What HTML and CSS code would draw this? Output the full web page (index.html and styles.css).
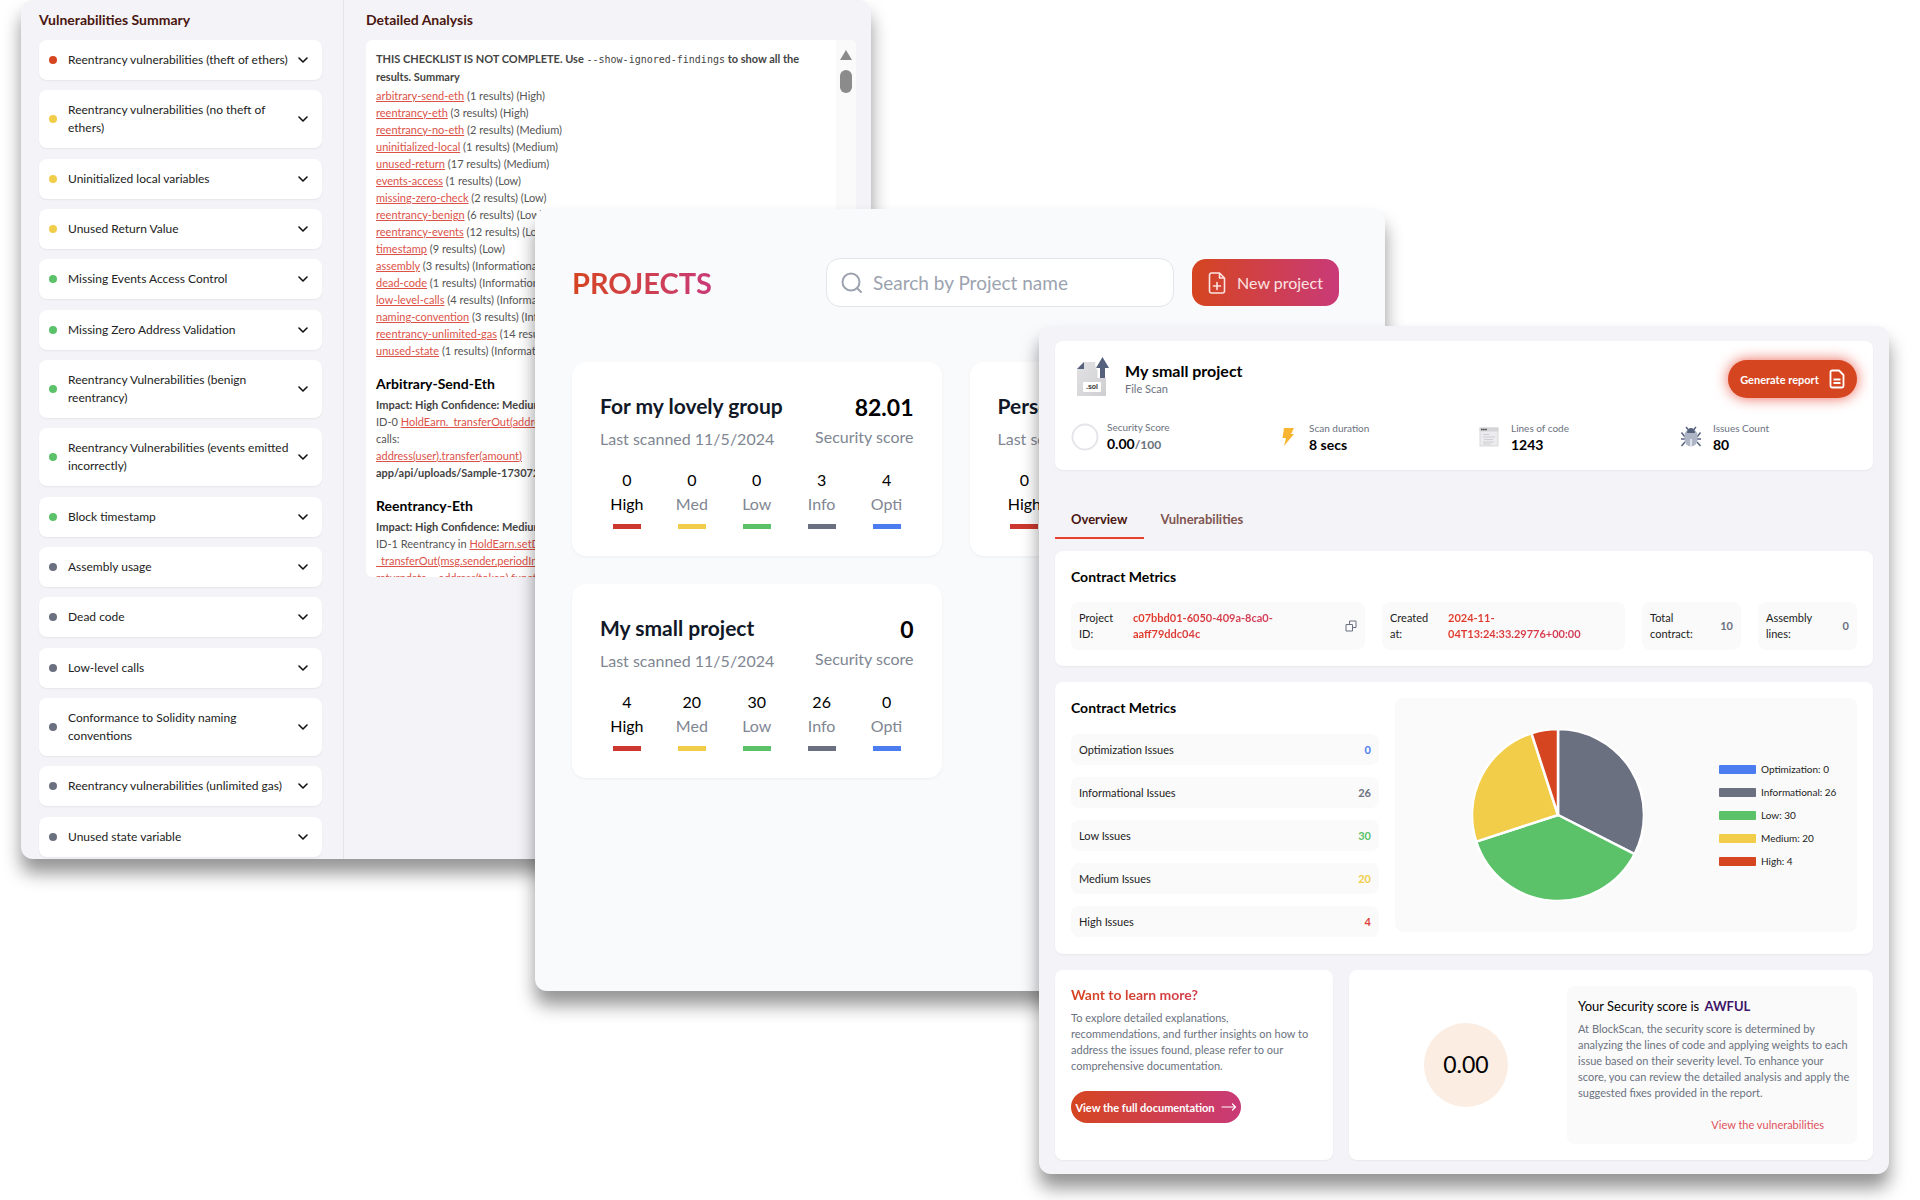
FILE: index.html
```html
<!DOCTYPE html>
<html lang="en">
<head>
<meta charset="utf-8">
<title>BlockScan</title>
<link rel="stylesheet" href="styles.css">
</head>
<body>
<svg class="defs" aria-hidden="true">
  <symbol id="chevron" viewBox="0 0 10 6"><path d="M1 1l4 4 4-4" fill="none" stroke="currentColor" stroke-width="1.6" stroke-linecap="round" stroke-linejoin="round"/></symbol>
</svg>
<main class="desktop">

<section class="window findings">
  <aside class="summary">
    <h2 class="side-title">Vulnerabilities Summary</h2>
    <div class="accordion">
      <button class="acc"><i class="dot high"></i><span>Reentrancy vulnerabilities (theft of ethers)</span><svg class="chev"><use href="#chevron"/></svg></button>
      <button class="acc"><i class="dot medium"></i><span>Reentrancy vulnerabilities (no theft of<br>ethers)</span><svg class="chev"><use href="#chevron"/></svg></button>
      <button class="acc"><i class="dot medium"></i><span>Uninitialized local variables</span><svg class="chev"><use href="#chevron"/></svg></button>
      <button class="acc"><i class="dot medium"></i><span>Unused Return Value</span><svg class="chev"><use href="#chevron"/></svg></button>
      <button class="acc"><i class="dot low"></i><span>Missing Events Access Control</span><svg class="chev"><use href="#chevron"/></svg></button>
      <button class="acc"><i class="dot low"></i><span>Missing Zero Address Validation</span><svg class="chev"><use href="#chevron"/></svg></button>
      <button class="acc"><i class="dot low"></i><span>Reentrancy Vulnerabilities (benign<br>reentrancy)</span><svg class="chev"><use href="#chevron"/></svg></button>
      <button class="acc"><i class="dot low"></i><span>Reentrancy Vulnerabilities (events emitted<br>incorrectly)</span><svg class="chev"><use href="#chevron"/></svg></button>
      <button class="acc"><i class="dot low"></i><span>Block timestamp</span><svg class="chev"><use href="#chevron"/></svg></button>
      <button class="acc"><i class="dot info"></i><span>Assembly usage</span><svg class="chev"><use href="#chevron"/></svg></button>
      <button class="acc"><i class="dot info"></i><span>Dead code</span><svg class="chev"><use href="#chevron"/></svg></button>
      <button class="acc"><i class="dot info"></i><span>Low-level calls</span><svg class="chev"><use href="#chevron"/></svg></button>
      <button class="acc"><i class="dot info"></i><span>Conformance to Solidity naming<br>conventions</span><svg class="chev"><use href="#chevron"/></svg></button>
      <button class="acc"><i class="dot info"></i><span>Reentrancy vulnerabilities (unlimited gas)</span><svg class="chev"><use href="#chevron"/></svg></button>
      <button class="acc"><i class="dot info"></i><span>Unused state variable</span><svg class="chev"><use href="#chevron"/></svg></button>
    </div>
  </aside>
  <div class="analysis">
    <h2 class="side-title">Detailed Analysis</h2>
    <div class="report">
      <div class="report-text">
        <p class="notice">THIS CHECKLIST IS NOT COMPLETE. Use <code>--show-ignored-findings</code> to show all the<br>results. Summary</p>
        <ul class="checks">
          <li><a href="#c1">arbitrary-send-eth</a> (1 results) (High)</li>
          <li><a href="#c2">reentrancy-eth</a> (3 results) (High)</li>
          <li><a href="#c3">reentrancy-no-eth</a> (2 results) (Medium)</li>
          <li><a href="#c4">uninitialized-local</a> (1 results) (Medium)</li>
          <li><a href="#c5">unused-return</a> (17 results) (Medium)</li>
          <li><a href="#c6">events-access</a> (1 results) (Low)</li>
          <li><a href="#c7">missing-zero-check</a> (2 results) (Low)</li>
          <li><a href="#c8">reentrancy-benign</a> (6 results) (Low)</li>
          <li><a href="#c9">reentrancy-events</a> (12 results) (Low)</li>
          <li><a href="#c10">timestamp</a> (9 results) (Low)</li>
          <li><a href="#c11">assembly</a> (3 results) (Informational)</li>
          <li><a href="#c12">dead-code</a> (1 results) (Informational)</li>
          <li><a href="#c13">low-level-calls</a> (4 results) (Informational)</li>
          <li><a href="#c14">naming-convention</a> (3 results) (Informational)</li>
          <li><a href="#c15">reentrancy-unlimited-gas</a> (14 results) (Informational)</li>
          <li><a href="#c16">unused-state</a> (1 results) (Informational)</li>
        </ul>
        <h3>Arbitrary-Send-Eth</h3>
        <p><b>Impact: High Confidence: Medium</b><br>ID-0 <a href="#f0">HoldEarn._transferOut(address,uint256)</a> sends eth<br>calls:<br><a href="#f1">address(user).transfer(amount)</a><br><b>app/api/uploads/Sample-1730726662.sol</b></p>
        <h3>Reentrancy-Eth</h3>
        <p><b>Impact: High Confidence: Medium</b><br>ID-1 Reentrancy in <a href="#f2">HoldEarn.setDeposit(uint256)</a>:<br><a href="#f3">_transferOut(msg.sender,periodInfo)</a><br><a href="#f4">returndata = address(token).functionCall(data)</a></p>
      </div>
      <div class="scroll" aria-hidden="true"><i class="up"></i><i class="thumb"></i></div>
    </div>
  </div>
</section>

<section class="window projects">
  <header class="bar">
    <h1>PROJECTS</h1>
    <label class="search">
      <svg viewBox="0 0 22 22"><circle cx="10" cy="10" r="8.5"/><path d="M16.200 16.200L20 20"/></svg>
      <input type="text" aria-label="Search by Project name" placeholder="Search by Project name">
    </label>
    <button class="new"><svg viewBox="0 0 18 22"><path d="M11.500 1H3.500A2 2 0 0 0 1.500 3v16a2 2 0 0 0 2 2h11a2 2 0 0 0 2-2V6zM11.500 1v5h5M9 10.500v7M5.500 14h7"/></svg>New project</button>
  </header>
  <div class="cards">
    <article class="card">
      <div class="top"><div><h2>For my lovely group</h2><p>Last scanned 11/5/2024</p></div><div class="score"><strong>82.01</strong><p>Security score</p></div></div>
      <ul class="counts"><li><b>0</b><span class="first">High</span><i class="c-high"></i></li><li><b>0</b><span>Med</span><i class="medium"></i></li><li><b>0</b><span>Low</span><i class="low"></i></li><li><b>3</b><span>Info</span><i class="info"></i></li><li><b>4</b><span>Opti</span><i class="opti"></i></li></ul>
    </article>
    <article class="card">
      <div class="top"><div><h2>Personal project</h2><p>Last scanned 11/5/2024</p></div><div class="score"><strong>0</strong><p>Security score</p></div></div>
      <ul class="counts"><li><b>0</b><span class="first">High</span><i class="c-high"></i></li><li><b>0</b><span>Med</span><i class="medium"></i></li><li><b>0</b><span>Low</span><i class="low"></i></li><li><b>0</b><span>Info</span><i class="info"></i></li><li><b>0</b><span>Opti</span><i class="opti"></i></li></ul>
    </article>
    <article class="card">
      <div class="top"><div><h2>My small project</h2><p>Last scanned 11/5/2024</p></div><div class="score"><strong>0</strong><p>Security score</p></div></div>
      <ul class="counts"><li><b>4</b><span class="first">High</span><i class="c-high"></i></li><li><b>20</b><span>Med</span><i class="medium"></i></li><li><b>30</b><span>Low</span><i class="low"></i></li><li><b>26</b><span>Info</span><i class="info"></i></li><li><b>0</b><span>Opti</span><i class="opti"></i></li></ul>
    </article>
  </div>
</section>

<section class="window overview">
  <header class="panel head">
    <div class="head-row">
      <svg class="file" viewBox="0 0 32 40">
        <defs><linearGradient id="fg" x1="0" y1="0" x2="1" y2="1"><stop offset="0" stop-color="#e2e2e4"/><stop offset="1" stop-color="#cfcfd2"/></linearGradient></defs>
        <path d="M7 5h11.500c-1 3 0 6 2 8v8h8.500v18H0V12z" fill="url(#fg)"/>
        <path d="M7 5v7H0z" fill="#56617d"/>
        <path d="M25.500 0l6.500 11h-4v10h-5V11h-4z" fill="#56617d"/>
        <rect x="6" y="25" width="18" height="10" rx="1" fill="#fff"/>
        <text x="15" y="32" text-anchor="middle" class="file-ext">.sol</text>
      </svg>
      <div class="who"><h1>My small project</h1><p>File Scan</p></div>
      <button class="generate">Generate report<svg viewBox="0 0 16 20"><path d="M10 1.500H3A1.500 1.500 0 0 0 1.500 3v14A1.500 1.500 0 0 0 3 18.500h10a1.500 1.500 0 0 0 1.500-1.500V6zM4.500 10.500h7M4.500 14h7"/></svg></button>
    </div>
    <dl class="facts">
      <div><svg viewBox="0 0 28 28"><circle cx="14" cy="14" r="12.500" fill="none" stroke="#e5e5ea" stroke-width="2"/></svg><div><dt>Security Score</dt><dd>0.00<small>/100</small></dd></div></div>
      <div><svg viewBox="0 0 28 28"><path d="M11 5h10l-3 6h3L11 23l2-8H9.500z" fill="#f7b531"/></svg><div><dt>Scan duration</dt><dd>8 secs</dd></div></div>
      <div><svg viewBox="0 0 28 28"><rect x="5" y="5" width="18" height="18" fill="#ececee" stroke="#d9d9dc"/><path d="M4.500 4.500h19v4h-19z" fill="#d5d5d8"/><path d="M6 6.500h6" stroke="#444" stroke-width="1.600" stroke-dasharray="1.600 .5"/><path d="M8 11.500h6M8 14h12M9 16.500h9M8 19h11M8 21h8" stroke="#c8c8cc" stroke-width=".8"/></svg><div><dt>Lines of code</dt><dd>1243</dd></div></div>
      <div><svg viewBox="0 0 28 28"><path d="M9 4l3 3.500M19 4l-3 3.500M8 14L4.500 9.500M20 14l3.500-4.500M8 16H4M20 16h4M8 19l-3.500 4M20 19l3.500 4" stroke="#56617d" stroke-width="1.500" fill="none"/><path d="M7.500 12a6.500 6 0 0 1 13 0v5a6.500 6.500 0 0 1-13 0z" fill="#aeb6c6"/><path d="M10 10a4 5 0 0 1 8 0z" fill="#56617d"/><path d="M14 16v7.500" stroke="#fff" stroke-width="1.200"/></svg><div><dt>Issues Count</dt><dd>80</dd></div></div>
    </dl>
  </header>

  <nav class="tabs"><a class="on" href="#overview">Overview</a><a href="#vulnerabilities">Vulnerabilities</a></nav>

  <section class="panel meta">
    <h2>Contract Metrics</h2>
    <dl class="boxes">
      <div class="box"><dt>Project<br>ID:</dt><dd class="grad">c07bbd01-6050-409a-8ca0-<br>aaff79ddc04c</dd><button class="copy" aria-label="Copy"><svg viewBox="0 0 12 12"><path d="M1 4.500h6.500V11H1zM4.500 4.500V1H11v6.500H7.500"/></svg></button></div>
      <div class="box at"><dt>Created<br>at:</dt><dd class="grad">2024-11-<br>04T13:24:33.29776+00:00</dd></div>
      <div class="box num"><dt>Total<br>contract:</dt><dd>10</dd></div>
      <div class="box num"><dt>Assembly<br>lines:</dt><dd>0</dd></div>
    </dl>
  </section>

  <section class="panel metrics">
    <div>
      <h2>Contract Metrics</h2>
      <table class="issues">
        <tr><th>Optimization Issues</th><td class="t-opti">0</td></tr>
        <tr><th>Informational Issues</th><td class="t-info">26</td></tr>
        <tr><th>Low Issues</th><td class="t-low">30</td></tr>
        <tr><th>Medium Issues</th><td class="t-medium">20</td></tr>
        <tr><th>High Issues</th><td class="t-high">4</td></tr>
      </table>
    </div>
    <figure class="chart">
      <svg class="pie" viewBox="-86 -86 172 172" role="img" aria-label="Issues by severity">
        <g stroke="#fff" stroke-width="2.500" stroke-linejoin="round">
          <path d="M0 0V-86A86 86 0 0 1 76.630 39.040Z" fill="#6b7080"/>
          <path d="M0 0L76.630 39.040A86 86 0 0 1-81.790 26.580Z" fill="#5bc26a"/>
          <path d="M0 0L-81.790 26.580A86 86 0 0 1-26.580-81.790Z" fill="#f1cd49"/>
          <path d="M0 0L-26.580-81.790A86 86 0 0 1 0-86Z" fill="#d54520"/>
        </g>
      </svg>
      <ul class="legend"><li><i class="opti"></i>Optimization: 0</li><li><i class="info"></i>Informational: 26</li><li><i class="low"></i>Low: 30</li><li><i class="medium"></i>Medium: 20</li><li><i class="high"></i>High: 4</li></ul>
    </figure>
  </section>

  <div class="bottom">
    <section class="panel learn">
      <h2><span class="grad-wide">Want to learn more?</span></h2>
      <p>To explore detailed explanations,<br>recommendations, and further insights on how to<br>address the issues found, please refer to our<br>comprehensive documentation.</p>
      <a class="docs" href="#docs">View the full documentation<svg viewBox="0 0 16 8"><path d="M1 4h13.500M11.500 1l3 3-3 3"/></svg></a>
    </section>
    <section class="panel verdict">
      <div class="gauge"><span>0.00</span></div>
      <div class="explain">
        <h2>Your Security score is <b>AWFUL</b></h2>
        <p>At BlockScan, the security score is determined by<br>analyzing the lines of code and applying weights to each<br>issue based on their severity level. To enhance your<br>score, you can review the detailed analysis and apply the<br>suggested fixes provided in the report.</p>
        <a href="#vulnerabilities">View the vulnerabilities</a>
      </div>
    </section>
  </div>
</section>
</main>
</body>
</html>
```
FILE: styles.css
```css
* { box-sizing: border-box; }
body, h1, h2, h3, p, ul, dl, dd, figure { margin: 0; padding: 0; }
ul { list-style: none; }
body { background: #fff; color: #000; font-family: Lato, "Liberation Sans", sans-serif; font-size: 11px; }
button, input { font: inherit; color: inherit; border: 0; background: none; padding: 0; }
h1, h2, h3 { font-weight: 700; }
svg { display: block; flex: none; }
.defs { width: 0; height: 0; position: absolute; }

.high { background: #d54520; }
.c-high { background: #cc382f; }
.medium { background: #f1cd49; }
.low { background: #5bc26a; }
.info { background: #6b7080; }
.opti { background: #4c7df0; }

.desktop { position: relative; min-height: 100vh; overflow: hidden; }
.window { position: absolute; width: calc(50% - 110px); border-radius: 12px; overflow: clip; background: #f3f3f8; box-shadow: 0 14px 18px rgba(0, 0, 0, .42); }
.findings { left: 21px; top: 0; min-height: 859px; display: flex; }
.projects { left: calc(25% + 55px); top: 209px; min-height: 782px; padding: 49px 46px 40px 37px; background: #f9fafc; }
.overview { right: 31px; top: 326px; padding: 15px 16px 14px; }

/* findings */
.side-title { font-size: 14px; line-height: 20px; color: #4a1610; }
.summary { flex: none; width: 323px; padding: 10px 21px 2px 18px; border-right: 1px solid #e4e4ea; display: flex; flex-direction: column; gap: 10px; }
.accordion { flex: 1; display: flex; flex-direction: column; justify-content: space-between; }
.acc { display: flex; align-items: center; gap: 11px; padding: 11px 14px 11px 10px; border-radius: 8px; background: #fff; box-shadow: 0 1px 2px rgba(0, 0, 0, .06); font-size: 12px; line-height: 18px; color: #222; text-align: left; white-space: nowrap; }
.acc span { flex: 1; min-width: 0; }
.dot { flex: none; width: 8px; height: 8px; border-radius: 50%; }
.chev { width: 10px; height: 6px; color: #111; }
.analysis { flex: 1; min-width: 0; padding: 10px 15px 0 22px; }
.report { display: flex; justify-content: space-between; margin-top: 10px; height: 537px; overflow: hidden; border-radius: 6px; background: #fff; }
.report-text { padding: 10px 0 0 10px; white-space: nowrap; color: #555; line-height: 17px; }
.report a { color: #dc5248; text-decoration: underline; }
.notice { font-weight: 700; color: #444; line-height: 18px; }
.notice code { font: 400 10px/16px "DejaVu Sans Mono", monospace; }
.report b { color: #444; }
.report h3 { font-size: 14px; line-height: 20px; color: #000; margin: 15px 0 2px; }
.checks { margin-top: 1px; }
.scroll { width: 20px; padding-top: 10px; background: #fafafa; display: flex; flex-direction: column; align-items: center; gap: 10px; }
.up { border: 6px solid transparent; border-top: 0; border-bottom: 10px solid #8b8b8b; }
.thumb { width: 12px; height: 23px; border-radius: 6px; background: #8b8b8b; }

/* projects */
.bar { display: flex; align-items: center; }
.bar h1 { font-size: 29px; line-height: 36px; background: linear-gradient(90deg, #d54520, #c93a78); background-clip: text; color: transparent; }
.search { display: flex; align-items: center; gap: 10px; width: 348px; height: 49px; margin-left: auto; padding: 0 14px; border: 1px solid #e3e5e9; border-radius: 14px; background: #fff; }
.search svg { width: 22px; height: 22px; fill: none; stroke: #9ca3af; stroke-width: 2; stroke-linecap: round; }
.search input { flex: 1; min-width: 0; font-size: 19px; outline: 0; }
.search input::placeholder { color: #9ca3af; opacity: 1; }
.new { display: flex; align-items: center; justify-content: center; gap: 11px; width: 147px; height: 47px; margin-left: 18px; border-radius: 14px; background: linear-gradient(90deg, #d54520, #c93a78); color: #fbe3e0; font-size: 16px; white-space: nowrap; }
.new svg { width: 18px; height: 22px; fill: none; stroke: currentColor; stroke-width: 1.6; stroke-linejoin: round; stroke-linecap: round; }
.cards { display: grid; grid-template-columns: 1fr 1fr; gap: 28px; margin-top: 55px; }
.card { padding: 28px 28px 27px; border-radius: 14px; background: #fff; box-shadow: 0 1px 3px rgba(0, 0, 0, .05); white-space: nowrap; }
.top { display: flex; justify-content: space-between; }
.card h2 { font-size: 21px; line-height: 32px; color: #111827; }
.card p { font-size: 16px; line-height: 24px; color: #808692; margin-top: 5px; }
.score { text-align: right; }
.score strong { display: block; font-size: 23px; line-height: 34px; }
.card .score p { margin-top: 1px; }
.counts { display: grid; grid-template-columns: repeat(5, 1fr); gap: 11px; margin-top: 17px; }
.counts li { display: flex; flex-direction: column; align-items: center; font-size: 16px; line-height: 24px; }
.counts b { font-weight: 400; }
.counts span { color: #808692; }
.counts .first { color: #000; }
.counts i { width: 28px; height: 5px; margin-top: 8px; }

/* overview */
.panel { border-radius: 8px; background: #fff; padding: 16px; box-shadow: 0 1px 2px rgba(0, 0, 0, .05); }
.panel h2 { font-size: 14px; line-height: 20px; }
.head-row { display: flex; align-items: flex-start; }
.file { width: 32px; height: 40px; margin-left: 6px; }
.file-ext { font: 700 7px "Liberation Sans", sans-serif; fill: #333; }
.who { margin: 4px auto 0 16px; }
.who h1 { font-size: 16px; line-height: 20px; }
.who p { font-size: 11px; line-height: 16px; color: #6b7280; }
.generate { display: flex; align-items: center; justify-content: center; gap: 10px; width: 129px; height: 38px; margin-top: 3px; border-radius: 19px; background: #d54520; color: #fff; font-weight: 700; box-shadow: 0 0 14px rgba(229, 50, 30, .75); white-space: nowrap; }
.generate svg { width: 16px; height: 20px; fill: none; stroke: #fff; stroke-width: 1.8; stroke-linejoin: round; }
.facts { display: grid; grid-template-columns: repeat(4, 1fr); gap: 22px; margin-top: 21px; }
.facts > div { display: flex; align-items: center; gap: 8px; }
.facts svg { width: 28px; height: 28px; }
.facts dt { font-size: 10px; line-height: 16px; color: #6b7280; }
.facts dd { font-size: 14px; line-height: 18px; font-weight: 700; }
.facts small { font-size: 12px; color: #6b7280; }
.tabs { display: flex; margin-top: 35px; }
.tabs a { padding: 4px 17px 8px 16px; border-bottom: 2px solid transparent; font-size: 13px; line-height: 20px; font-weight: 700; color: #7f5550; text-decoration: none; }
.tabs .on { color: #4a1610; border-color: #e5412d; }
.meta { margin-top: 12px; }
.boxes { display: grid; grid-template-columns: 294fr 243fr 99fr 99fr; gap: 17px; margin-top: 15px; }
.box { display: flex; align-items: center; min-width: 0; padding: 8px; border-radius: 8px; background: #fafafa; line-height: 16px; color: #222; }
.box dt { flex: none; width: 54px; }
.box dd { font-weight: 700; white-space: nowrap; }
.grad { background: linear-gradient(90deg, #e03a26, #d23a5a); background-clip: text; color: transparent; }
.at dt { width: 58px; }
.num { justify-content: space-between; }
.num dd { color: #6b7080; }
.copy { margin-left: auto; }
.copy svg { width: 12px; height: 12px; fill: none; stroke: #6b7080; stroke-width: 1; }
.metrics { display: grid; grid-template-columns: 308fr 462fr; gap: 16px; margin-top: 16px; padding-bottom: 17px; }
.issues { width: 100%; margin: 4px 0 -12px; border-spacing: 0 12px; }
.issues th, .issues td { padding: 0 8px; height: 31px; background: #fafafa; line-height: 16px; }
.issues th { text-align: left; font-weight: 400; color: #222; border-radius: 8px 0 0 8px; }
.issues td { text-align: right; font-weight: 700; border-radius: 0 8px 8px 0; }
.issues .t-opti { color: #4c7df0; }
.issues .t-info { color: #6b7080; }
.issues .t-low { color: #5bc26a; }
.issues .t-medium { color: #f1cd49; }
.issues .t-high { color: #e0403a; }
.chart { display: flex; align-items: center; justify-content: space-between; height: 234px; padding: 0 22px 0 77px; border-radius: 8px; background: #fafafa; }
.pie { width: 172px; height: 172px; }
.legend { display: flex; flex-direction: column; gap: 7px; width: 116px; }
.legend li { display: flex; align-items: center; gap: 5px; font-size: 10px; line-height: 16px; color: #222; white-space: nowrap; }
.legend i { flex: none; width: 37px; height: 9px; border-radius: 1px; }
.bottom { display: grid; grid-template-columns: 278fr 524fr; gap: 16px; margin-top: 16px; }
.learn p, .explain p { line-height: 16px; color: #6b7280; white-space: nowrap; }
.learn h2 { line-height: 18px; }
.learn p { margin-top: 6px; }
.grad-wide { background: linear-gradient(90deg, #d54520, #d23a4a); background-clip: text; color: transparent; }
.docs { display: inline-flex; align-items: center; justify-content: center; gap: 6px; width: 170px; height: 32px; margin-top: 17px; border-radius: 16px; background: linear-gradient(90deg, #d54520, #c93a78); color: #fff; font-weight: 700; text-decoration: none; white-space: nowrap; }
.docs svg { width: 16px; height: 8px; fill: none; stroke: #fff; stroke-width: 1.2; stroke-linecap: round; }
.verdict { display: flex; align-items: center; }
.gauge { flex: 1; display: flex; justify-content: center; }
.gauge span { width: 84px; height: 84px; border-radius: 50%; background: #fcede2; font-size: 23px; line-height: 82px; text-align: center; }
.explain { flex: none; width: 290px; height: 158px; padding: 11px; border-radius: 8px; background: #fafafa; }
.explain h2 { font-size: 13px; font-weight: 400; line-height: 18px; white-space: nowrap; }
.explain h2 b { margin-left: 2px; color: #3d1466; }
.explain p { margin-top: 6px; }
.explain a { display: block; margin: 16px 22px 0 0; line-height: 16px; text-align: right; text-decoration: none; color: #e0505a; }
```
